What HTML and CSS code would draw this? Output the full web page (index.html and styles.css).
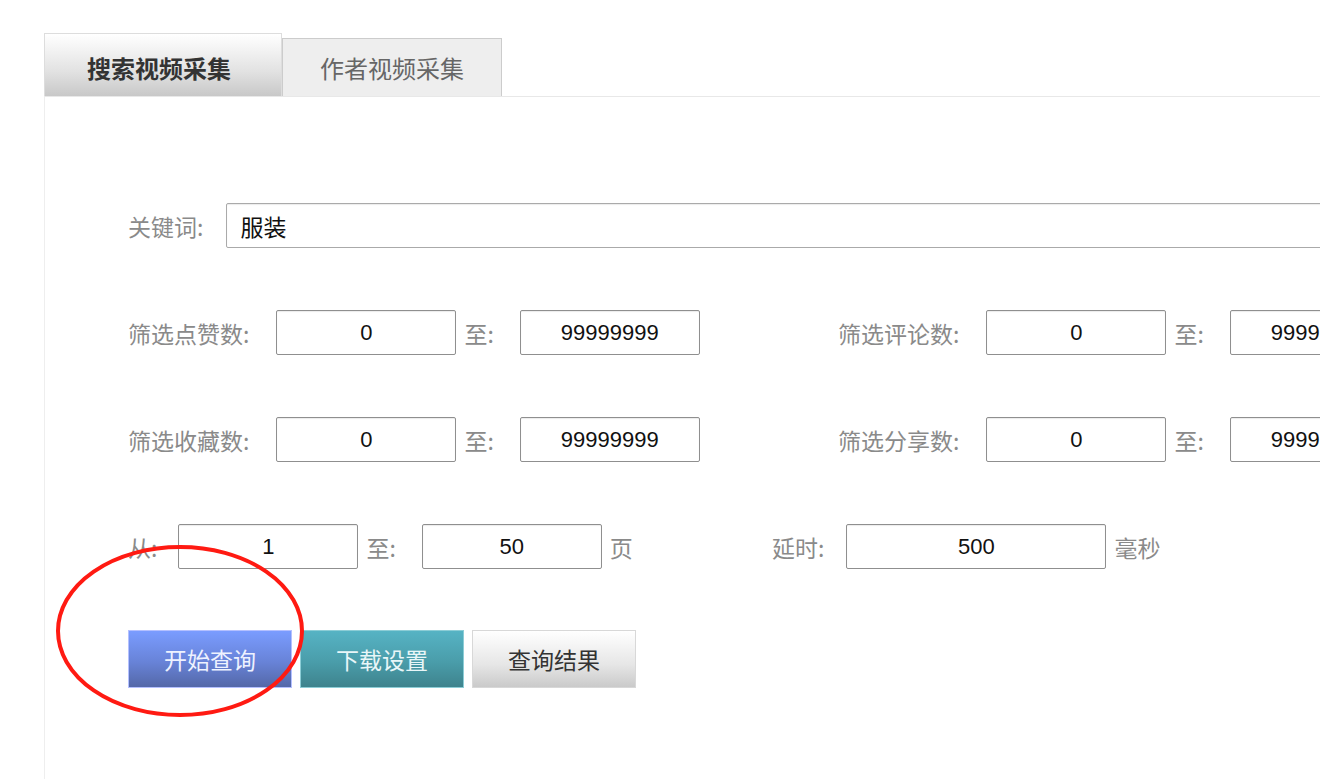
FILE: index.html
```html
<!DOCTYPE html>
<html lang="zh-CN">
<head>
    <meta charset="UTF-8">
    <meta name="viewport" content="width=device-width, initial-scale=1.0">
    <title>视频采集</title>
    <link rel="stylesheet" href="styles.css">
</head>
<body>
    <div class="page">
        <div class="tabs">
            <div class="tab tab-active">搜索视频采集</div>
            <div class="tab">作者视频采集</div>
        </div>

        <div class="panel">
            <div class="row">
                <span class="label label-key">关键词:</span>
                <input class="field field-keyword" type="text" value="服装">
            </div>

            <div class="row">
                <div class="group">
                    <span class="label">筛选点赞数:</span>
                    <input class="field" type="text" value="0">
                    <span class="label label-to">至:</span>
                    <input class="field" type="text" value="99999999">
                </div>
                <div class="group">
                    <span class="label">筛选评论数:</span>
                    <input class="field" type="text" value="0">
                    <span class="label label-to">至:</span>
                    <input class="field" type="text" value="99999999">
                </div>
            </div>

            <div class="row">
                <div class="group">
                    <span class="label">筛选收藏数:</span>
                    <input class="field" type="text" value="0">
                    <span class="label label-to">至:</span>
                    <input class="field" type="text" value="99999999">
                </div>
                <div class="group">
                    <span class="label">筛选分享数:</span>
                    <input class="field" type="text" value="0">
                    <span class="label label-to">至:</span>
                    <input class="field" type="text" value="99999999">
                </div>
            </div>

            <div class="row">
                <div class="group group-pages">
                    <span class="label label-from">从:</span>
                    <input class="field" type="text" value="1">
                    <span class="label label-to">至:</span>
                    <input class="field" type="text" value="50">
                    <span class="label label-unit">页</span>
                </div>
                <span class="label label-delay">延时:</span>
                <input class="field field-delay" type="text" value="500">
                <span class="label label-unit">毫秒</span>
            </div>

            <div class="actions">
                <button class="btn btn-blue">开始查询</button>
                <button class="btn btn-teal">下载设置</button>
                <button class="btn btn-grey">查询结果</button>
            </div>
        </div>

        <!-- 标注圈 -->
        <svg class="mark" width="254" height="178" viewBox="0 0 254 178">
            <ellipse cx="127" cy="88" rx="122" ry="84" fill="none" stroke="#ff1a12" stroke-width="4"/>
        </svg>
    </div>
</body>
</html>
```

FILE: styles.css
```css
html, body {
    margin: 0;
    padding: 0;
    height: 100%;
    overflow: hidden;
    background: #FFFFFF;
}

body {
    font-family: "Noto Sans CJK SC", "Liberation Sans", sans-serif;
    font-size: 23px;
    color: #333333;
}

.page {
    position: relative;
    display: flex;
    flex-direction: column;
    padding: 33px 0 0 44px;
    height: 100%;
    box-sizing: border-box;
    overflow: hidden;
}

/* 选项卡 */
.tabs {
    display: flex;
    align-items: flex-end;
    flex: 0 0 auto;
}

.tab {
    box-sizing: border-box;
    width: 220px;
    height: 58px;
    display: flex;
    align-items: center;
    justify-content: center;
    font-size: 24px;
    color: #666666;
    background: #EEEEEE;
    border: 1px solid #CCCCCC;
    border-bottom: none;
}

.tab-active {
    width: 238px;
    height: 63px;
    padding-top: 5px;
    padding-right: 8px;
    font-weight: bold;
    color: #333333;
    background: linear-gradient(to bottom, #FFFFFF 0%, #E2E2E2 60%, #C8C8C8 100%);
    border: 1px solid #DDDDDD;
    border-bottom: none;
}

.panel {
    flex: 1 1 auto;
    border-top: 1px solid #E8E8E8;
    border-left: 1px solid #EEEEEE;
    padding: 106px 0 0 83px;
    overflow: hidden;
}

/* 表单行 */
.row {
    display: flex;
    align-items: center;
    height: 45px;
    margin-bottom: 62px;
    white-space: nowrap;
}

.group {
    display: flex;
    align-items: center;
    flex: 0 0 710px;
}

.group-pages {
    flex-basis: 644px;
}

.label {
    color: #8A8A8A;
    margin-right: 27px;
}

.label-key {
    margin-right: 23px;
}

.label-to {
    margin-left: 8px;
    margin-right: 26px;
}

.label-from {
    margin-right: 21px;
}

.label-delay {
    margin-right: 22px;
}

.label-unit {
    margin-left: 8px;
}

.field {
    box-sizing: border-box;
    width: 180px;
    height: 45px;
    flex: 0 0 auto;
    border: 1px solid #8F8F8F;
    border-radius: 2px;
    box-shadow: inset 0 1px 1px rgba(0, 0, 0, 0.08);
    font-family: "Liberation Sans", "Noto Sans CJK SC", sans-serif;
    font-size: 22px;
    color: #111111;
    text-align: center;
    padding: 0;
    outline: none;
}

.field-keyword {
    width: 1200px;
    text-align: left;
    padding-left: 13px;
    font-family: "Noto Sans CJK SC", sans-serif;
    font-size: 23px;
    border-color: #AAAAAA;
}

.field-delay {
    width: 260px;
}

/* 按钮 */
.actions {
    display: flex;
    gap: 8px;
    margin-top: -1px;
}

.btn {
    box-sizing: border-box;
    width: 164px;
    height: 58px;
    font-family: "Noto Sans CJK SC", sans-serif;
    font-size: 23px;
    cursor: pointer;
    padding: 0;
}

.btn-blue {
    color: #EEF2FF;
    background: linear-gradient(to bottom, #7A9CFF 0%, #6883D8 55%, #5468A8 100%);
    border: 1px solid #B4C0FF;
}

.btn-teal {
    color: #E8F6F8;
    background: linear-gradient(to bottom, #56B3C4 0%, #4A9DAA 55%, #3E838D 100%);
    border: 1px solid #8CCDD6;
}

.btn-grey {
    color: #333333;
    background: linear-gradient(to bottom, #FFFFFF 0%, #E6E6E6 60%, #CACACA 100%);
    border: 1px solid #D8D8D8;
}

.mark {
    position: absolute;
    left: 53px;
    top: 543px;
    pointer-events: none;
}
```
